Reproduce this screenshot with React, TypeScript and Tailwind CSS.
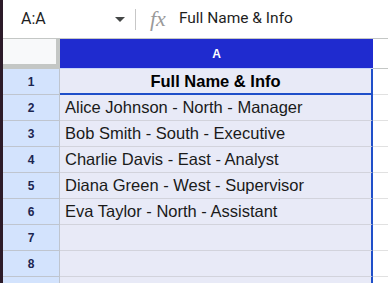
import React from 'react';

const rows = [
  'Full Name & Info',
  'Alice Johnson - North - Manager',
  'Bob Smith - South - Executive',
  'Charlie Davis - East - Analyst',
  'Diana Green - West - Supervisor',
  'Eva Taylor - North - Assistant',
  '',
  '',
  '',
];

export default function App() {
  return (
    <div className="flex w-[388px] h-[283px] overflow-hidden bg-white" style={{ fontFamily: '"Liberation Sans", Arial, sans-serif' }}>
      <div className="w-[3px] shrink-0 bg-[#2c1b29]" />
      <div className="flex flex-col flex-1 min-w-0">
        {/* formula bar */}
        <div className="h-[39px] shrink-0 flex items-center border-b border-[#c4c7c5] bg-white font-['Roboto',sans-serif]">
          <div className="w-[132px] flex items-center pl-[18px] pr-[10px]">
            <span className="text-[16px] text-[#1f1f1f]">A:A</span>
            <svg className="ml-auto" width="10" height="5" viewBox="0 0 10 5">
              <path d="M0 0 L10 0 L5 5 Z" fill="#444746" />
            </svg>
          </div>
          <div className="w-px h-[21px] bg-[#c7c7c7]" />
          <span className="ml-[14px] text-[22px] italic text-[#9a9a9a] font-['Liberation_Serif',serif] leading-none">fx</span>
          <span className="ml-[13px] text-[15.5px] text-[#1f1f1f]">Full Name &amp; Info</span>
        </div>

        {/* column header */}
        <div className="h-[30px] shrink-0 flex">
          <div className="w-[57px] shrink-0 bg-[#c4c7c5] pr-[4px] pb-[5px]">
            <div className="h-full bg-[#f8f9fa]" />
          </div>
          <div className="w-[313px] shrink-0 flex items-center justify-center bg-[#1f2bcf] border-b border-[#c6d4f7]">
            <span className="text-[12px] font-bold text-white">A</span>
          </div>
          <div className="flex-1 border-b border-[#c4c7c5]" />
        </div>

        {/* rows */}
        {rows.map((text, i) => (
          <div key={i} className="h-[26px] shrink-0 flex">
            <div className="w-[57px] shrink-0 flex items-center justify-center bg-[#d3e3fd] border-r border-b border-[#bfc5cf]">
              <span className="text-[12px] font-bold text-[#1b2550]">{i < 8 ? i + 1 : ''}</span>
            </div>
            <div
              className={
                'w-[313px] shrink-0 flex items-center bg-[#e8eaf7] border-r-2 border-r-[#1f4fc9] ' +
                (i === 0 ? 'justify-center border-b-2 border-b-[#1f4fc9]' : 'pl-[5px] border-b border-b-[#d2d3dc]')
              }
            >
              <span className={'text-[16.5px] text-[#1a1a1a] whitespace-nowrap ' + (i === 0 ? 'font-bold text-black' : '')}>{text}</span>
            </div>
            <div className="flex-1 border-b border-[#e1e1e1]" />
          </div>
        ))}
      </div>
    </div>
  );
}
